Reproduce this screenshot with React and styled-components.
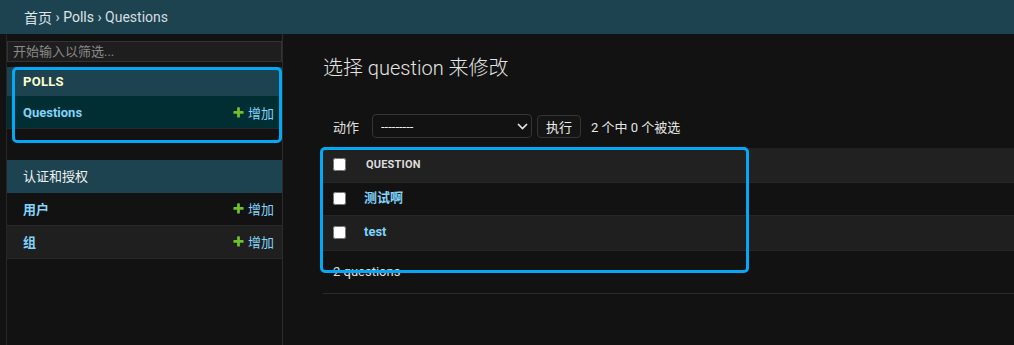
import React from 'react';
import styled, { createGlobalStyle } from 'styled-components';

const GlobalStyle = createGlobalStyle`
  html, body { margin: 0; padding: 0; background: #121212; }
  body {
    font-family: Roboto, "Noto Sans CJK SC", "Noto Sans", sans-serif;
    color: #eeeeee;
    font-size: 13px;
  }
  * { box-sizing: border-box; }
`;

const Page = styled.div`
  display: flex;
  flex-direction: column;
  min-height: 100vh;
  overflow: hidden;
`;

const Breadcrumbs = styled.div`
  height: 34px;
  flex: none;
  background: #1e4350;
  padding: 0 24px;
  display: flex;
  align-items: center;
  font-size: 14px;
  color: #d4dde1;
  white-space: pre;
`;

const Crumb = styled.a`
  color: #dfe5e8;
  text-decoration: none;
`;

const Shell = styled.div`
  display: flex;
  flex: 1;
`;

const Sidebar = styled.nav`
  flex: none;
  width: 277px;
  margin-left: 6px;
  padding-top: 7px;
  border-left: 1px solid #262626;
  border-right: 1px solid #2c2c2c;
`;

const Filter = styled.input`
  display: block;
  width: 100%;
  height: 21px;
  margin: 0 0 5px;
  padding: 2px 5px;
  border: 1px solid #333333;
  background: #1e1e1e;
  color: #eeeeee;
  font: 13px Roboto, "Noto Sans CJK SC", sans-serif;
  outline: none;
  &::placeholder { color: #8a8a8a; }
`;

const Module = styled.div`
  position: relative;
  margin-bottom: 31px;
`;

const Caption = styled.div`
  height: ${p => p.$h}px;
  background: #1e4350;
  padding: 0 0 ${p => (p.$current ? 0 : 2)}px 16px;
  display: flex;
  align-items: center;
  font-size: 13px;
  color: ${p => (p.$current ? '#ffffcc' : '#f0f0f0')};
  font-weight: ${p => (p.$current ? 700 : 400)};
  letter-spacing: ${p => (p.$current ? '0.3px' : '0')};
`;

const NavRow = styled.div`
  height: 33px;
  display: flex;
  align-items: center;
  justify-content: space-between;
  padding: 0 8px ${p => (p.$cjk ? 2 : 0)}px 16px;
  background: ${p => p.$bg};
  border-bottom: 1px solid #282828;
`;

const ModelLink = styled.a`
  color: #81d4fa;
  font-weight: 700;
  text-decoration: none;
`;

const AddLink = styled.a`
  display: flex;
  align-items: center;
  gap: 3px;
  color: #81d4fa;
  text-decoration: none;
`;

const Highlight = styled.div`
  position: absolute;
  left: ${p => p.$x}px;
  top: ${p => p.$y}px;
  width: ${p => p.$w}px;
  height: ${p => p.$h}px;
  border: 3px solid #03a9f4;
  border-radius: 5px;
  pointer-events: none;
  z-index: 2;
`;

const Main = styled.main`
  flex: 1;
  min-width: 0;
  padding: 22px 0 0 40px;
`;

const Title = styled.h1`
  margin: 0;
  font-size: 20px;
  line-height: 24px;
  font-weight: 300;
  color: #e4e4e4;
`;

const Actions = styled.div`
  display: flex;
  align-items: center;
  height: 24px;
  margin-top: 34px;
  padding-left: 10px;
`;

const Label = styled.span`
  color: #e0e0e0;
  margin-right: 13px;
`;

const SelectWrap = styled.div`
  position: relative;
  width: 160px;
  height: 24px;
`;

const Select = styled.select`
  appearance: none;
  width: 100%;
  height: 100%;
  background: #121212;
  border: 1px solid #353535;
  border-radius: 4px;
  color: #eeeeee;
  padding: 0 8px;
  font: 13px Roboto, "Noto Sans CJK SC", sans-serif;
  outline: none;
`;

const Chevron = styled.svg`
  position: absolute;
  right: 4px;
  top: 9px;
  pointer-events: none;
`;

const Go = styled.button`
  margin-left: 5px;
  height: 23px;
  width: 44px;
  padding: 0;
  border: 1px solid #353535;
  border-radius: 4px;
  background: #151515;
  color: #eeeeee;
  font: 13px Roboto, "Noto Sans CJK SC", sans-serif;
`;

const Counter = styled.span`
  margin-left: 10px;
  color: #e6e6e6;
`;

const TableWrap = styled.div`
  position: relative;
  margin-top: 10px;
`;

const Table = styled.table`
  width: 100%;
  border-collapse: collapse;
`;

const Row = styled.tr`
  height: ${p => p.$h}px;
  background: ${p => p.$bg};
  border-bottom: 1px solid #262626;
`;

const CheckCell = styled.td`
  width: 33px;
  padding: 0 0 0 10px;
  text-align: left;
  vertical-align: middle;
  line-height: 0;
`;

const HeadText = styled.th`
  text-align: left;
  padding: 0 10px;
  font-size: 11px;
  font-weight: 700;
  text-transform: uppercase;
  color: #dddddd;
  letter-spacing: 0.2px;
`;

const Cell = styled.th`
  text-align: left;
  padding: 0 8px 2px;
  font-weight: 700;
  line-height: 16px;
`;

const RowLink = styled.a`
  color: #81d4fa;
  text-decoration: none;
`;

const Check = styled.input`
  margin: 0;
  width: 13px;
  height: 13px;
  vertical-align: middle;
`;

const Paginator = styled.p`
  margin: 0;
  padding: 10px 0 10px 10px;
  line-height: 22px;
  font-size: 13px;
  color: #e0e0e0;
  border-bottom: 1px solid #2a2a2a;
`;

const Plus = () => (
  <svg width="13" height="13" viewBox="0 0 1792 1792">
    <path
      fill="#70bf2b"
      d="M1600 796v192q0 40-28 68t-68 28h-416v416q0 40-28 68t-68 28h-192q-40 0-68-28t-28-68v-416h-416q-40 0-68-28t-28-68v-192q0-40 28-68t68-28h416v-416q0-40 28-68t68-28h192q40 0 68 28t28 68v416h416q40 0 68 28t28 68z"
    />
  </svg>
);

const navModules = [
  {
    name: 'Polls',
    current: true,
    h: 29,
    models: [{ name: 'Questions', bg: '#012e33' }],
  },
  {
    name: '认证和授权',
    current: false,
    h: 33,
    models: [
      { name: '用户', bg: '#121212', cjk: true },
      { name: '组', bg: '#1f1f1f', cjk: true },
    ],
  },
];

const questions = [
  { text: '测试啊', h: 33 },
  { text: 'test', h: 35 },
];

export default function App() {
  return (
    <>
      <GlobalStyle />
      <Page>
        <Breadcrumbs>
          <Crumb href="#">首页</Crumb>
          {' › '}
          <Crumb href="#">Polls</Crumb>
          {' › '}
          Questions
        </Breadcrumbs>
        <Shell>
          <Sidebar>
            <Filter placeholder="开始输入以筛选..." />
            {navModules.map(m => (
              <Module key={m.name}>
                <Caption $h={m.h} $current={m.current}>
                  {m.current ? m.name.toUpperCase() : m.name}
                </Caption>
                {m.models.map(model => (
                  <NavRow key={model.name} $bg={model.bg} $cjk={model.cjk}>
                    <ModelLink href="#">{model.name}</ModelLink>
                    <AddLink href="#">
                      <Plus />
                      增加
                    </AddLink>
                  </NavRow>
                ))}
                {m.current && <Highlight $x={5} $y={0} $w={270} $h={76} />}
              </Module>
            ))}
          </Sidebar>
          <Main>
            <Title>选择 question 来修改</Title>
            <Actions>
              <Label>动作</Label>
              <SelectWrap>
                <Select defaultValue="">
                  <option value="">---------</option>
                  <option value="delete">删除所选的 questions</option>
                </Select>
                <Chevron width="11" height="7" viewBox="0 0 11 7">
                  <polyline
                    points="1,1 5.5,5.5 10,1"
                    fill="none"
                    stroke="#e8e8e8"
                    strokeWidth="1.6"
                  />
                </Chevron>
              </SelectWrap>
              <Go type="button">执行</Go>
              <Counter>2 个中 0 个被选</Counter>
            </Actions>
            <TableWrap>
              <Table>
                <thead>
                  <Row $bg="#212121" $h={34}>
                    <CheckCell as="th">
                      <Check type="checkbox" />
                    </CheckCell>
                    <HeadText>Question</HeadText>
                  </Row>
                </thead>
                <tbody>
                  {questions.map((q, i) => (
                    <Row key={q.text} $h={q.h} $bg={i % 2 ? '#1f1f1f' : '#121212'}>
                      <CheckCell>
                        <Check type="checkbox" />
                      </CheckCell>
                      <Cell>
                        <RowLink href="#">{q.text}</RowLink>
                      </Cell>
                    </Row>
                  ))}
                </tbody>
              </Table>
              <Paginator>2 questions</Paginator>
              <Highlight $x={-3} $y={-1} $w={429} $h={126} />
            </TableWrap>
          </Main>
        </Shell>
      </Page>
    </>
  );
}
